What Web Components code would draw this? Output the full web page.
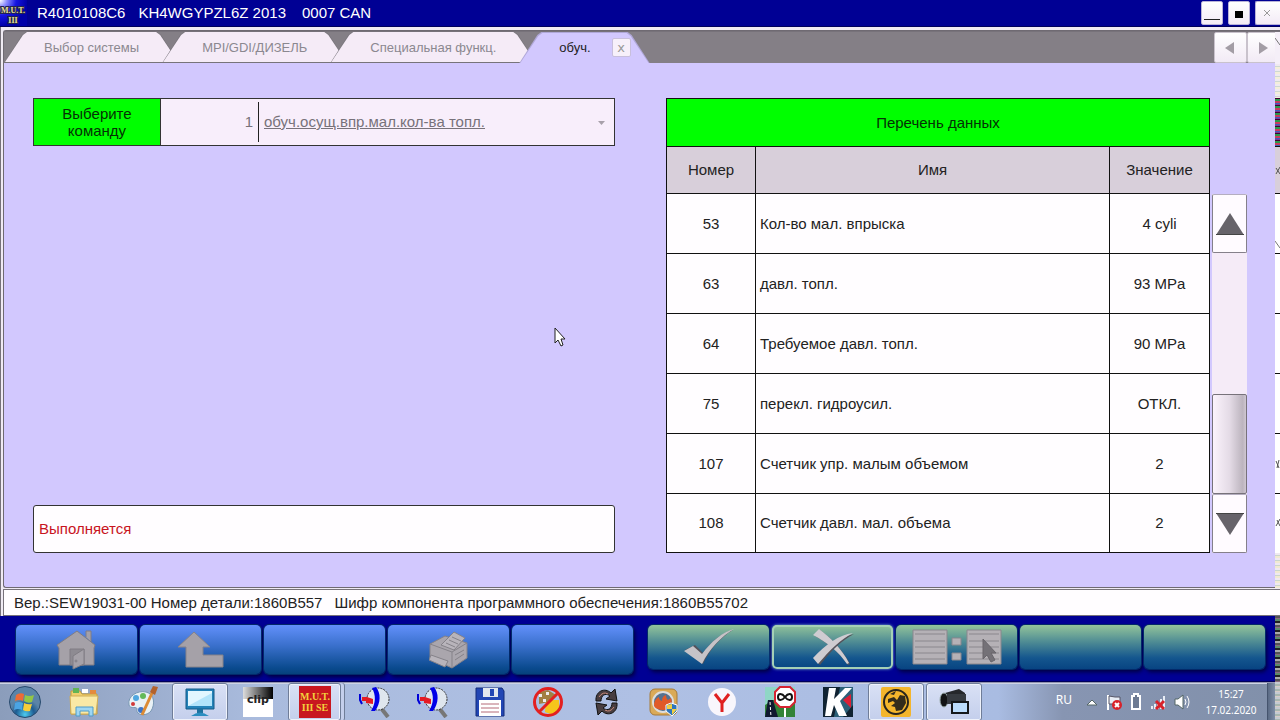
<!DOCTYPE html>
<html lang="ru">
<head>
<meta charset="utf-8">
<title>M.U.T. III SE</title>
<style>
html,body{margin:0}
body{font:15px/18px "Liberation Sans",Arial,sans-serif;background:#000090;color:#222}
</style>
</head>
<body>
<mut-app></mut-app>
<script>
const define = (name, html, init) => {
  const tpl = document.createElement('template');
  tpl.innerHTML = '<style>*{box-sizing:border-box}button{font:inherit;margin:0;padding:0;border:0;color:inherit}button svg{display:block}</style>' + html;
  customElements.define(name, class extends HTMLElement {
    constructor() {
      super();
      this.attachShadow({mode: 'open'}).append(tpl.content.cloneNode(true));
      if (init) init.call(this, this.shadowRoot);
    }
  });
};

/* ---------- title bar ---------- */
define('title-bar', `
<style>
:host{display:flex;align-items:center;height:27px;background:#000094;color:#fff;border-bottom:1px solid #00005c;box-sizing:border-box}
svg{display:block}
.logo{width:27px;height:26px;flex:none}
.ids{display:flex;gap:13px;margin-left:10px;flex:1;white-space:pre}
.ids span:last-child{margin-left:3px}
.win{display:flex;gap:5px}
button{width:22px;height:24px;background:linear-gradient(#fff,#f3ebf6);border:1px solid #b9b3d8;border-radius:2px;display:grid;place-items:center}
button:last-child{width:25px;border-right:0;border-radius:2px 0 0 2px}
</style>
<svg class="logo" viewBox="0 0 27 26" aria-hidden="true">
<defs><radialGradient id="g" cx="0" cy="0" r="1"><stop offset="0" stop-color="#fff"/><stop offset=".25" stop-color="#8f90ff"/><stop offset=".6" stop-color="#1515e0"/><stop offset="1" stop-color="#0000a8"/></radialGradient></defs>
<rect width="27" height="26" fill="url(#g)"/>
<text x="13" y="13" text-anchor="middle" font-family="Liberation Serif,serif" font-weight="700" font-size="8" fill="#e8e29a" stroke="#222250" stroke-width="2" paint-order="stroke">M.U.T.</text>
<text x="13" y="23" text-anchor="middle" font-family="Liberation Serif,serif" font-weight="700" font-size="8" fill="#e8e29a" stroke="#222250" stroke-width="2" paint-order="stroke">III</text></svg>
<div class="ids"><span>R4010108C6</span><span>KH4WGYPZL6Z 2013</span><span>0007 CAN</span></div>
<div class="win">
<button aria-label="Свернуть"><svg width="18" height="18"><path d="M1 15.500h16" stroke="#222"/></svg></button>
<button aria-label="Развернуть"><svg width="18" height="18"><path d="M5 7h8v7H5z" fill="#000"/></svg></button>
<button aria-label="Закрыть"><svg width="24" height="18"><path d="M8 6l6 6M14 6l-6 6" stroke="#999"/></svg></button>
</div>`);

/* ---------- tabs ---------- */
define('tab-item', `
<style>
:host{display:block;position:relative;height:31px;margin-right:-17px;color:#8b8890;--face:#f5ebf7}
:host([active]){color:#222;--face:#d2c8fe;margin-right:0;z-index:2}
:host([active]) .edge{background:#b0a8d8}
.edge,.face{position:absolute;inset:0;clip-path:polygon(0 100%,18px 3px,22px 0,calc(100% - 22px) 0,calc(100% - 18px) 3px,100% 100%)}
.edge{background:#77747a}
.face{inset:0 1px 1px 1px;background:var(--face)}
:host([active]) .face{inset:1px 1px 0 1px}
.row{position:relative;display:flex;align-items:center;height:31px;padding:0 40px;font-size:13px;white-space:nowrap}
:host([active]) .row{padding-right:19px}
</style>
<div class="edge"></div><div class="face"></div><div class="row"><slot></slot></div>`);

define('tab-strip', `
<style>
:host{display:flex;align-items:flex-end;height:32px;background:#847f86;position:relative}
.scroll{margin-left:auto;display:flex}
button{width:33px;height:31px;background:linear-gradient(#fff,#f2eaf5);border-radius:2px;display:grid;place-items:center;border:1px solid #c9c2cc}
.x{width:19px;height:19px;margin-left:21px;color:#999;font:13px/15px "DejaVu Sans",sans-serif;background:#f7f0fa;border:1px solid #c8bfdc;display:block}
</style>
<tab-item>Выбор системы</tab-item><tab-item>MPI/GDI/ДИЗЕЛЬ</tab-item><tab-item>Специальная функц.</tab-item>
<tab-item active>обуч.<button class="x" aria-label="Закрыть вкладку">x</button></tab-item>
<div class="scroll">
<button aria-label="Назад"><svg width="14" height="14"><path d="M1 7L10 1v12z" fill="#a39da5"/></svg></button>
<button aria-label="Вперёд"><svg width="14" height="14"><path d="M11 7L2 1v12z" fill="#a39da5"/></svg></button>
</div>`);

/* ---------- command chooser ---------- */
define('command-picker', `
<style>
:host{display:flex;height:48px;border:1px solid #333;box-sizing:border-box}
label{width:126px;flex:none;background:#00ff00;display:grid;place-items:center;text-align:center;line-height:17px;color:#053005}
.field{flex:1;display:flex;align-items:center;background:#f8eefb;border-left:1px solid #333;color:#77727a;position:relative}
.n{width:97px;text-align:right;padding-right:5px}
.field i{width:1px;height:40px;background:#222;flex:none}
select{appearance:none;flex:1;height:44px;border:0;background:none;font:inherit;color:inherit;padding:0 30px 0 5px;text-decoration:underline;outline:0}
svg{position:absolute;right:8px;top:22px}
</style>
<label for="cmd">Выберите<br>команду</label>
<div class="field"><span class="n">1</span><i></i>
<select id="cmd"><option>обуч.осущ.впр.мал.кол-ва топл.</option></select>
<svg width="8" height="5"><path d="M0 0h7L3.500 4z" fill="#a8a0aa"/></svg></div>`);

/* ---------- data list ---------- */
const ROWS = [[53,'Кол-во мал. впрыска','4 cyli'],[63,'давл. топл.','93 MPa'],[64,'Требуемое давл. топл.','90 MPa'],[75,'перекл. гидроусил.','ОТКЛ.'],[107,'Счетчик упр. малым объемом','2'],[108,'Счетчик давл. мал. объема','2']];
define('data-list', `
<style>
:host{display:flex;gap:2px}
table{flex:1;border-collapse:collapse;table-layout:fixed;width:100%;background:#fffdff}
th,td{border:1px solid #111;padding:0 4px;font-weight:400;text-align:center}
td:nth-child(2){text-align:left}
.cap th{height:48px;background:#00ff00;color:#053005}
.head th{height:47px;background:#d8cfda}
td{height:60px}
tr:last-child td{height:59px}
.n{width:89px}.v{width:100px}
.bar{width:35px;flex:none;margin-top:96px;display:flex;flex-direction:column;background:#f5ebf7;margin-right:1px}
button{height:59px;background:#fffbff;border:1px solid #85808a;border-top-color:#b5aec0;border-radius:2px;display:grid;place-items:center}
.track{flex:1;display:flex;flex-direction:column;justify-content:flex-end}
.thumb{height:100px;border:1px solid #77727a;border-radius:2px;background:linear-gradient(90deg,#fbf3fc,#e4dbe6 50%,#bcb4be 90%,#d0c8d2)}
</style>
<table><colgroup><col class="n"><col><col class="v"></colgroup>
<thead><tr class="cap"><th colspan="3">Перечень данных</th></tr><tr class="head"><th>Номер</th><th>Имя</th><th>Значение</th></tr></thead><tbody></tbody></table>
<div class="bar"><button aria-label="Вверх"><svg width="28" height="22"><path d="M14 0l14 22H0z" fill="#67636a"/><path d="M0 22h28" stroke="#444" stroke-width="2"/></svg></button>
<div class="track"><div class="thumb"></div></div>
<button aria-label="Вниз"><svg width="28" height="22"><path d="M0 0h28L14 22z" fill="#67636a"/><path d="M0 0h28" stroke="#444" stroke-width="2"/></svg></button></div>`,
function(root){
  root.querySelector('tbody').innerHTML = ROWS.map(r => '<tr>' + r.map(c => `<td>${c}</td>`).join('') + '</tr>').join('');
});

/* ---------- function keys ---------- */
define('fn-key', `
<style>
:host{display:block;flex:1;height:49px;min-width:0}
:host([green]){height:44px}
button{width:100%;height:100%;display:grid;place-items:center;border-radius:5px;background:linear-gradient(#6290fb,#3a70cc 42%,#0a4a8e 88%,#06417c);box-shadow:0 0 0 1px #032a6a,2px 3px 4px #00003c}
:host([green]) button{background:linear-gradient(#93c49b,#4f8c94 38%,#14568e 75%,#084482)}
:host([focus]) button{box-shadow:inset 0 0 0 2px #a5d0b6,0 0 3px #8cc}
</style><button><slot></slot></button>`);
define('fn-bar', `
<style>
:host{display:flex;gap:15px;background:#000094;padding:9px 15px 0 16px;height:66px;box-sizing:border-box;border-bottom:1px solid #000058}
div{flex:1;display:flex;gap:3px;min-width:0}
svg{display:block}
</style>
<div>
<fn-key><svg width="42" height="42" viewBox="0 0 42 42"><g fill="#a5a1a8" stroke="#807d84" stroke-linejoin="round"><path d="M30 8V2h5v11"/><path d="M3 36V19l-2-3L21 2l18 14-1 3v17z"/><path d="M14 20h14v16H14z" fill="#8e8b92"/><path d="M17 27l11-7v15l-11 5z"/><circle cx="20" cy="32" r="1"/></g></svg></fn-key>
<fn-key><svg width="46" height="38" viewBox="0 0 46 38"><path d="M16 1l16 15h-7v8h20v12H8V16H0z" fill="#a5a1a8" stroke="#858289"/></svg></fn-key>
<fn-key></fn-key>
<fn-key><svg width="40" height="40" viewBox="0 0 40 40"><g fill="#aaa6ad" stroke="#858289" stroke-linejoin="round"><path d="M1 14L16 6l22 7v15L23 38 1 28z"/><path d="M1 14l22 8 15-9M23 22v16" fill="none"/><path d="M12 15L25 2l11 6-11 12z" fill="#b8b4bb"/><path d="M17 13l9 4M20 10l9 4M23 7l9 4" fill="none"/><path d="M2 25l17 6-3 6-16-7z" fill="#b8b4bb"/><path d="M26 25l9-5M26 30l9-6" fill="none"/></g></svg></fn-key>
<fn-key></fn-key>
</div>
<div>
<fn-key green><svg width="52" height="36" viewBox="0 0 52 36"><path d="M50 1C38 8 27 20 20 35L2 21l10-5 8 8C29 12 38 4 50 1z" fill="#55525a"/><path d="M51 0C39 7 26 20 19 35L1 22l9-5 9 8C28 13 39 3 51 0z" fill="#c6c3c8"/></svg></fn-key>
<fn-key green focus><svg width="44" height="36" viewBox="0 0 44 36"><path d="M8 0C19 8 31 20 38 34l-2 1C28 23 17 14 3 6z" fill="#55525a" transform="translate(1 1)"/><path d="M8 0C19 8 31 20 38 34l-2 1C28 23 17 14 2 6z" fill="#cfccd1"/><path d="M42 4C30 10 19 21 8 35l-5-5C16 16 28 7 42 4z" fill="#55525a" transform="translate(1 1)"/><path d="M42 4C30 10 19 21 7 35l-5-6C15 15 28 6 42 4z" fill="#cfccd1"/></svg></fn-key>
<fn-key green><svg width="90" height="36" viewBox="0 0 90 36"><g fill="#b5b1b6" stroke="#8a878d"><path d="M1 1h34v34H1zM55 1h34v34H55z"/><path d="M40 9h9v7h-9zM40 24h9v7h-9z"/><path d="M3 5h30M3 12h30M3 18h30M3 24h30M3 30h30M57 5h30M57 12h30M57 18h30M57 24h30M57 30h30" fill="none"/></g><path d="M71 10v20l4-4 4 7 4-2-4-7h5z" fill="#747177" stroke="#68656b"/></svg></fn-key>
<fn-key green></fn-key><fn-key green></fn-key>
</div>`);

/* ---------- taskbar ---------- */
const lens = '<path d="M23 22l7 9" stroke="#777" stroke-width="4"/><circle cx="20" cy="13" r="11" fill="#dfe6ee" stroke="#333" stroke-dasharray="2 1"/><path d="M18 1c5 6 5 16-1 24h-4c5-8 5-16 1-23z" fill="#0000e8"/><path d="M4 11h5l6 2v5l-7-1v-2H4z" fill="#e51b23"/><path d="M2 8v6l2 4" stroke="#0000d8" stroke-width="2" fill="none"/>';
const TASKS = [
['Проводник','<path d="M3 5h9l2 3h15v20H3z" fill="#efcf6e" stroke="#c39c3c"/><path d="M5 2h6v5H5z" fill="#62b455"/><path d="M14 3h6v4h-6z" fill="#fff"/><path d="M22 4h6v4h-6z" fill="#e48b3c"/><path d="M2 10h28l-2 18H3z" fill="#fae9a5" stroke="#d0ad55"/><path d="M8 30v-9h17v9h-4v-5h-9v5z" fill="#9fd7f2" stroke="#4f9bc9"/>'],
['Paint','<path d="M3 19C1 10 12 4 20 6c9 2 9 13 5 19-5 6-15 4-14-1 1-5-7 0-8-5z" fill="#e9f1f6" stroke="#7897b3"/><circle cx="10" cy="12" r="3" fill="#50a7e0"/><circle cx="17" cy="10" r="3" fill="#64b95a"/><circle cx="7" cy="18" r="2" fill="#d03939"/><circle cx="15" cy="24" r="3" fill="#3d74c8"/><path d="M27 5L16 29" stroke="#dc8b35" stroke-width="3"/><path d="M24 6l3-6 5 1-3 8z" fill="#b3622d"/>'],
['Компьютер','<path d="M2 3h28v20H2z" fill="#2483b8" stroke="#145b88"/><path d="M4 5h24v15H4z" fill="#e2f7ff"/><path d="M4 20L28 7v13z" fill="#b2e4fa"/><path d="M13 23h6v4h-6z" fill="#1d719e"/><path d="M7 30q9-7 18 0z" fill="#2a8dc0"/>','open'],
['Clip','<defs><linearGradient id="c" x2="1" y2="0"><stop stop-color="#ddd"/><stop offset="1"/></linearGradient></defs><path d="M1 1h30v30H1z" fill="#fff"/><path d="M1 1h30v12H1z" fill="url(#c)"/><text x="16" y="17" text-anchor="middle" font-size="11" font-weight="700" font-family="DejaVu Sans,sans-serif" fill="#222">clip</text>'],
['M.U.T. III SE','<path d="M0 0h32v32H0z" fill="#c8171f"/><text x="16" y="14" text-anchor="middle" font-size="10" font-weight="700" font-family="Liberation Serif,serif" fill="#f2d13c">M.U.T.</text><text x="16" y="25" text-anchor="middle" font-size="10" font-weight="700" font-family="Liberation Serif,serif" fill="#f2d13c">III SE</text>','open stack'],
['Поиск 1',lens],['Поиск 2',lens],
['Сохранение','<path d="M2 2h26l2 3v25H2z" fill="#2246b4" stroke="#122a78"/><path d="M9 2h15v9H9z" fill="#e1e6ee"/><path d="M16 3h4v7h-4z" fill="#2246b4"/><path d="M5 14h22v16H5z" fill="#fff"/><path d="M7 18h18M7 22h18M7 26h18" stroke="#b56a78"/>'],
['Блокировка','<path d="M14 14h13v11l-6 4-8-3z" fill="#f6c51b"/><path d="M7 6l9-2 8 5-7 7-10 2z" fill="#a18042"/><path d="M7 8h3v3H7zM14 6h3v3h-3zM11 13h3v3h-3z" fill="#eee"/><circle cx="16" cy="16" r="13.500" fill="none" stroke="#e32020" stroke-width="3"/><path d="M7 26L26 7" stroke="#e32020" stroke-width="3"/>'],
['Обновление','<path d="M6 15C5 5 15 1 21 7l4-4 2 12-11-2 4-3c-5-4-9 0-9 5z" fill="#493e40" stroke="#111"/><path d="M27 17c1 10-9 14-15 8l-4 4-2-12 11 2-4 3c5 4 9 0 9-5z" fill="#493e40" stroke="#111"/><path d="M9 11q4-6 9-3M24 21q-4 6-9 3" stroke="#c8897a" fill="none"/>'],
['Nero','<rect x="2" y="3" width="27" height="26" rx="5" fill="#daaa58" stroke="#a77a38"/><circle cx="15" cy="16" r="10" fill="#54718f" stroke="#ddd" stroke-width="2"/><path d="M6 20q0-7 5-9 0 3 3 4 0-5 4-6 0 4 2 5l3-2q3 11-7 12-8 0-10-4z" fill="#e05a28"/><path d="M18 19l5-2 6 2v6l-5 5-6-5z" fill="#2e75bd" stroke="#fff"/><path d="M24 18v5h5l-5 6v-6h-5v-4z" fill="#f0cf44"/>'],
['Yandex','<circle cx="16" cy="16" r="14" fill="#f8f6fc"/><path d="M9 8l7 9 7-9M16 16v10" stroke="#e02020" stroke-width="3" fill="none"/>'],
['Дорога','<path d="M1 1h30v30H1z" fill="#8fd6c5"/><path d="M1 19l8-5 22 1v16H1z" fill="#328338"/><path d="M4 14h5l5 17H1z" fill="#101830"/><path d="M6 16l1 15" stroke="#fff" stroke-dasharray="3 2"/><path d="M21 19v12" stroke="#fff" stroke-width="2"/><path d="M16 1h10l5 5v10l-5 5H16l-5-5V6z" fill="#fff" stroke="#d52432" stroke-width="2"/><path d="M21 11c-3-4-7-4-7 0s4 4 7 0 7-4 7 0-4 4-7 0z" fill="none" stroke="#111" stroke-width="2"/>'],
['K','<path d="M1 1h30v30H1z" fill="#102332"/><path d="M18 1h13v18L21 31h-9z" fill="#2b6078"/><path d="M7 2h7l-2 11L23 2h7L18 15l7 15h-8l-5-11-3 11H3z" fill="#fff"/><path d="M29 8v14l-8-8z" fill="#db2036"/>'],
['Глобус','<rect x="1" y="1" width="30" height="30" rx="2" fill="#f4b52c"/><circle cx="16" cy="16" r="12" fill="none" stroke="#28251e" stroke-width="2"/><path d="M8 13l6-2 3 3 3-5 5 1 1 7-4 7-6 1-1-4-4-1 4-3-2-2-5 2zM10 8l6-3-2 4z" fill="#332c1c"/>','open'],
['Камера','<path d="M7 7l14-4 6 4v8H9z" fill="#25272b"/><ellipse cx="6" cy="14" rx="4" ry="7" fill="#121315" stroke="#9aa" stroke-width="1"/><path d="M9 8h19v10H9z" fill="#363a40"/><rect x="13" y="15" width="18" height="13" fill="#16181b"/><rect x="15" y="17" width="14" height="9" fill="#bcdcfc"/>','open']];
define('task-bar', `
<style>
:host{display:flex;flex:1;min-height:39px;box-sizing:border-box;border-top:1px solid #9193b0;background:linear-gradient(90deg,#8b9dbb 0,#a9bbdd 20%,#afc0e4 50%,#a9bce2 78%,#8795b2 83%,#8190aa);font:12px/16px "Noto Sans",sans-serif;color:#fff;box-shadow:inset 0 1px #cdd4e4}
.start{width:55px;flex:none;background:none;padding-right:5px;display:grid;place-items:center}
.tasks{display:flex;flex:1;min-width:0}
.t{width:58px;height:38px;flex:none;background:none;border:1px solid transparent;border-radius:3px;display:grid;place-items:center}
.open{width:56px;margin:0 1px;background:linear-gradient(#d9e1f5,#c4cfec);border-color:#6f7d98;box-shadow:inset 0 0 0 1px #eef2fb}
.stack{width:53px;margin:0 4px 0 1px;box-shadow:inset 0 0 0 1px #eef2fb,3px 0 #c4cfec,4px 0 #6f7d98}
.tray{display:flex;align-items:center;gap:7px}
.tray span{margin-right:7px;padding-bottom:5px}
time{width:68px;text-align:center;margin-right:2px;font-size:10px}
.desk{width:13px;background:linear-gradient(90deg,#5a6a84,#97a6be);border-left:1px solid #45546e}
</style>
<button class="start" aria-label="Пуск"><svg width="34" height="34" viewBox="0 0 34 34"><defs><radialGradient id="o" cy=".9"><stop stop-color="#4ecbef"/><stop offset=".6" stop-color="#1d5c92"/><stop offset="1" stop-color="#5b84a8"/></radialGradient></defs><circle cx="17" cy="17" r="15.500" fill="url(#o)" stroke="#27496d"/><path d="M8 10q4-3 8-1l-1 7q-4-2-8 0z" fill="#ee6b36"/><path d="M17 10q4 2 9 0l-2 7q-4 2-8-1z" fill="#93c746"/><path d="M7 18q4-2 8 0l-1 7q-4-2-8 0z" fill="#4aa4e4"/><path d="M16 18q4 2 8 1l-2 7q-4 1-7-1z" fill="#f8cd3a"/></svg></button>
<div class="tasks"></div>
<div class="tray"><span>RU</span>
<svg width="12" height="8"><path d="M1 7l5-5 5 5z" fill="#fff" stroke="#566"/></svg>
<svg width="18" height="18"><path d="M3 17V2" stroke="#fff" stroke-width="2"/><path d="M4 3l6 1 5 0v7H4z" fill="#e8edf5" stroke="#556"/><circle cx="12" cy="12" r="5" fill="#d8222a"/><path d="M10 10l4 4M14 10l-4 4" stroke="#fff" stroke-width="2"/></svg>
<svg width="12" height="18"><path d="M4 1h4v2h2v13H2V3h2z" fill="#6d7a92" stroke="#fff" stroke-width="2"/></svg>
<svg width="18" height="18"><path d="M3 16v-3M6 16v-5M9 16V9M12 16V6M15 16V3" stroke="#e8edf5" stroke-width="2"/><path d="M7 8l8 8M15 8l-8 8" stroke="#d8222a" stroke-width="3"/></svg>
<svg width="16" height="18"><path d="M1 6h3l5-4v14l-5-4H1z" fill="#fff" stroke="#566"/><path d="M11 6q2 3 0 6M13 3q4 6 0 12" stroke="#fff" fill="none"/></svg>
<time datetime="2020-02-17T15:27">15:27<br>17.02.2020</time></div>
<div class="desk"></div>`,
function(root){
  root.querySelector('.tasks').innerHTML = TASKS.map(([n,s,c='']) => `<button class="t ${c}" aria-label="${n}"><svg width="32" height="32" viewBox="0 0 32 32">${s}</svg></button>`).join('');
});

/* ---------- sliver of the neighbouring window at the right edge ---------- */
define('edge-sliver', `
<style>
:host{position:absolute;right:0;top:0;width:5px;height:100%;display:flex;flex-direction:column;overflow:hidden;pointer-events:none}
i{display:block;flex:none}
svg{position:absolute;left:0;top:0}
.a{height:32px}
.b{height:32px;background:#f5eff8}
.c{height:34px;background:repeating-linear-gradient(#efe9f0 0 2px,#cdd8d2 2px 3px,#f4eeda 3px 5px)}
.d{height:48px;background:repeating-linear-gradient(#403 0 1px,#2a9a4c 1px 3px,#c83a60 3px 5px,#3a62b8 5px 6px,#7a3a9a 6px 7px)}
.e{height:47px;background:#d8cfda;border-top:1px solid #111}
.f{height:360px;background:repeating-linear-gradient(#111 0 1px,#fff 1px 60px)}
.g{height:35px;background:repeating-linear-gradient(#efe9f0 0 2px,#c9d6cc 2px 3px,#f1ead2 3px 5px)}
.h{height:28px}
.k{height:66px;background:repeating-linear-gradient(#555 0 2px,#8a6a80 2px 3px,#5c8a6a 3px 5px,#222 5px 7px,#aaa 7px 9px)}
.l{flex:1;background:repeating-linear-gradient(#c5cbd2 0 2px,#a8b8b0 2px 4px,#d8ccc8 4px 5px)}
</style><i class="a"></i><i class="b"></i><i class="c"></i><i class="d"></i><i class="e"></i><i class="f"></i><i class="g"></i><i class="h"></i><i class="k"></i><i class="l"></i>
<svg width="5" height="560" aria-hidden="true"><g stroke="#555" fill="none"><path d="M0 38l5 7M0 241l5 7" stroke="#777"/><path d="M1 168l4 6M5 167l-4 7M1 461l3 7M4 460l-2 8M1 526l4-7M2 520l3 6"/></g></svg>`);

/* ---------- application ---------- */
define('mut-app', `
<style>
:host{display:flex;flex-direction:column;min-height:100vh;position:relative;overflow:hidden}
.frame{background:#f0ebf4;border-left:1px solid #77727a;padding:3px 0 0 2px}
.page{border:1px solid #6f6a72;border-right:0;border-radius:3px 0 0 3px;background:#d2c8fe}
tab-strip{border-top:1px solid #77727a}
main{display:grid;grid-template-columns:minmax(0,1fr) minmax(0,1fr);gap:51px;padding:35px 32px 34px 29px}
.left{display:flex;flex-direction:column;justify-content:space-between}
output{display:flex;align-items:center;height:48px;border:1px solid #333;border-radius:3px;background:#fffdff;color:#c8141e;padding:0 5px}
.status{background:#fffdff;border:1px solid #77727a;border-width:1px 0 1px 1px;margin-top:1px;height:27px;padding:0 10px;display:flex;align-items:center;gap:12px}
.cursor{position:absolute;left:554px;top:327px}
</style>
<title-bar></title-bar>
<div class="frame"><div class="page"><tab-strip></tab-strip>
<main><div class="left"><command-picker></command-picker><output>Выполняется</output></div><data-list></data-list></main></div>
<div class="status"><span>Вер.:SEW19031-00 Номер детали:1860B557</span><span>Шифр компонента программного обеспечения:1860B55702</span></div></div>
<fn-bar></fn-bar><task-bar></task-bar>
<svg class="cursor" width="13" height="20"><path d="M1 1v15l3-3 3 6 2-1-2-6h4z" fill="#fff" stroke="#222"/></svg>
<edge-sliver></edge-sliver>`);
</script>
</body>
</html>
